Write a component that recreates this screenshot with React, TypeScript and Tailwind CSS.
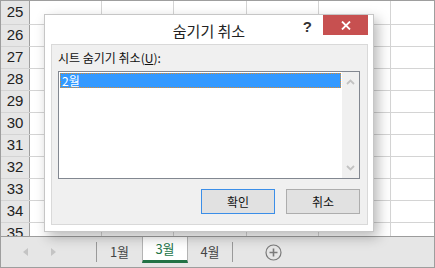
import { FC } from "react"

const ROWS = [25, 26, 27, 28, 29, 30, 31, 32, 33, 34, 35]
const COLS = [72, 72, 73, 72, 72]

const ko = { fontFamily: '"Noto Sans CJK KR", "Noto Sans", sans-serif' }

// 스프레드시트 격자
const Grid: FC = () => (
  <div className="h-[235px] overflow-hidden">
    {ROWS.map((n, i) => (
      <div
        key={n}
        className={`flex border-b border-[#d4d4d4] ${i === 0 ? "h-[24px]" : "h-[22px]"}`}
      >
        <div
          className="w-[29px] shrink-0 bg-[#e6e6e6] border-r border-[#9f9f9f] flex items-center justify-center text-[15px] text-[#222]"
          style={{ fontFamily: '"Liberation Sans", sans-serif' }}
        >
          {n}
        </div>
        {COLS.map((w, j) => (
          <div key={j} className="shrink-0 border-r border-[#d4d4d4]" style={{ width: w }} />
        ))}
        <div className="flex-1" />
      </div>
    ))}
  </div>
)

// 시트 탭
const TabBar: FC = () => (
  <div className="h-[31px] border-t border-[#9c9c9c] bg-[#e6e6e6] flex items-start text-[13px] text-[#444]" style={ko}>
    <div className="w-[95px] h-[30px] flex items-center">
      <svg width="6" height="8" viewBox="0 0 6 8" className="ml-[22px]">
        <path d="M5 0 L0 4 L5 8 Z" fill="#c4c4c4" />
      </svg>
      <svg width="6" height="8" viewBox="0 0 6 8" className="ml-[22px]">
        <path d="M0 0 L5 4 L0 8 Z" fill="#c4c4c4" />
      </svg>
    </div>
    <div className="w-px h-[20px] mt-[5px] bg-[#9a9a9a]" />
    <div className="w-[45px] h-[30px] flex items-center justify-center">1월</div>
    <div className="w-[46px] h-[26px] bg-white border-x border-[#b4b4b4] border-b-[3px] border-b-[#217346] flex items-center justify-center text-[#217346]">
      3월
    </div>
    <div className="w-[44px] h-[30px] flex items-center justify-center">4월</div>
    <div className="w-px h-[20px] mt-[5px] bg-[#9a9a9a]" />
    <div className="h-[30px] flex items-center ml-[32px]">
      <svg width="17" height="17" viewBox="0 0 17 17">
        <circle cx="8.5" cy="8.5" r="7.5" fill="none" stroke="#7a7a7a" strokeWidth="1.2" />
        <path d="M8.5 4.5 V12.5 M4.5 8.5 H12.5" stroke="#7a7a7a" strokeWidth="1.6" />
      </svg>
    </div>
  </div>
)

// 숨기기 취소 대화상자
const Dialog: FC = () => (
  <div
    className="absolute left-[43px] top-[13px] w-[330px] h-[218px] bg-white border border-[#c6c6c6] shadow-[4px_5px_12px_rgba(0,0,0,0.28)] flex flex-col"
    style={ko}
  >
    <div className="h-[29px] grid grid-cols-[1fr_auto_1fr]">
      <div />
      <div className="text-[15px] text-[#222] leading-none pt-[8px]">숨기기 취소</div>
      <div className="flex justify-end items-start pr-[5px]">
        <div className="text-[15px] font-bold text-[#333] leading-none mt-[4px] mr-[11px]" style={{ fontFamily: '"Liberation Sans", sans-serif' }}>
          ?
        </div>
        <div className="w-[45px] h-[20px] bg-[#c75050] flex items-center justify-center">
          <svg width="10" height="9" viewBox="0 0 10 9">
            <path d="M1 0.5 L9 8.5 M9 0.5 L1 8.5" stroke="white" strokeWidth="1.8" />
          </svg>
        </div>
      </div>
    </div>

    <div className="ml-[6px] mr-[5px] h-[181px] bg-[#f0f0f0] border border-[#d9d9d9] px-[6px] flex flex-col">
      <div className="text-[12px] text-[#111] h-[26px] pt-[7px] leading-none">
        시트 숨기기 취소(<span className="underline">U</span>):
      </div>
      <div className="w-[302px] h-[108px] border border-[#828790] bg-white flex">
        <div className="flex-1 p-px">
          <div className="h-[15px] bg-[#3399ff] outline outline-1 outline-dotted outline-[#e08a2a] -outline-offset-1 text-white text-[12px] leading-[15px] pl-[2px]">
            2월
          </div>
        </div>
        <div className="w-[17px] bg-[#f0f0f0] flex flex-col items-center justify-between py-[7px]">
          <svg width="9" height="6" viewBox="0 0 9 6">
            <path d="M1 5 L4.5 1.5 L8 5" fill="none" stroke="#c2c2c2" strokeWidth="1.8" />
          </svg>
          <svg width="9" height="6" viewBox="0 0 9 6">
            <path d="M1 1 L4.5 4.5 L8 1" fill="none" stroke="#c2c2c2" strokeWidth="1.8" />
          </svg>
        </div>
      </div>
      <div className="flex justify-end gap-[11px] mt-[10px] pr-px">
        <button className="w-[74px] h-[25px] bg-[#e1e1e1] border border-[#3b8ee8] text-[12px] text-[#111]">확인</button>
        <button className="w-[74px] h-[25px] bg-[#e1e1e1] border border-[#adadad] text-[12px] text-[#111]">취소</button>
      </div>
    </div>
  </div>
)

const App: FC = () => {
  return (
    <div className="w-[435px] h-[268px] relative overflow-hidden bg-white border border-[#9e9e9e]">
      <Grid />
      <TabBar />
      <Dialog />
    </div>
  )
}

export default App
